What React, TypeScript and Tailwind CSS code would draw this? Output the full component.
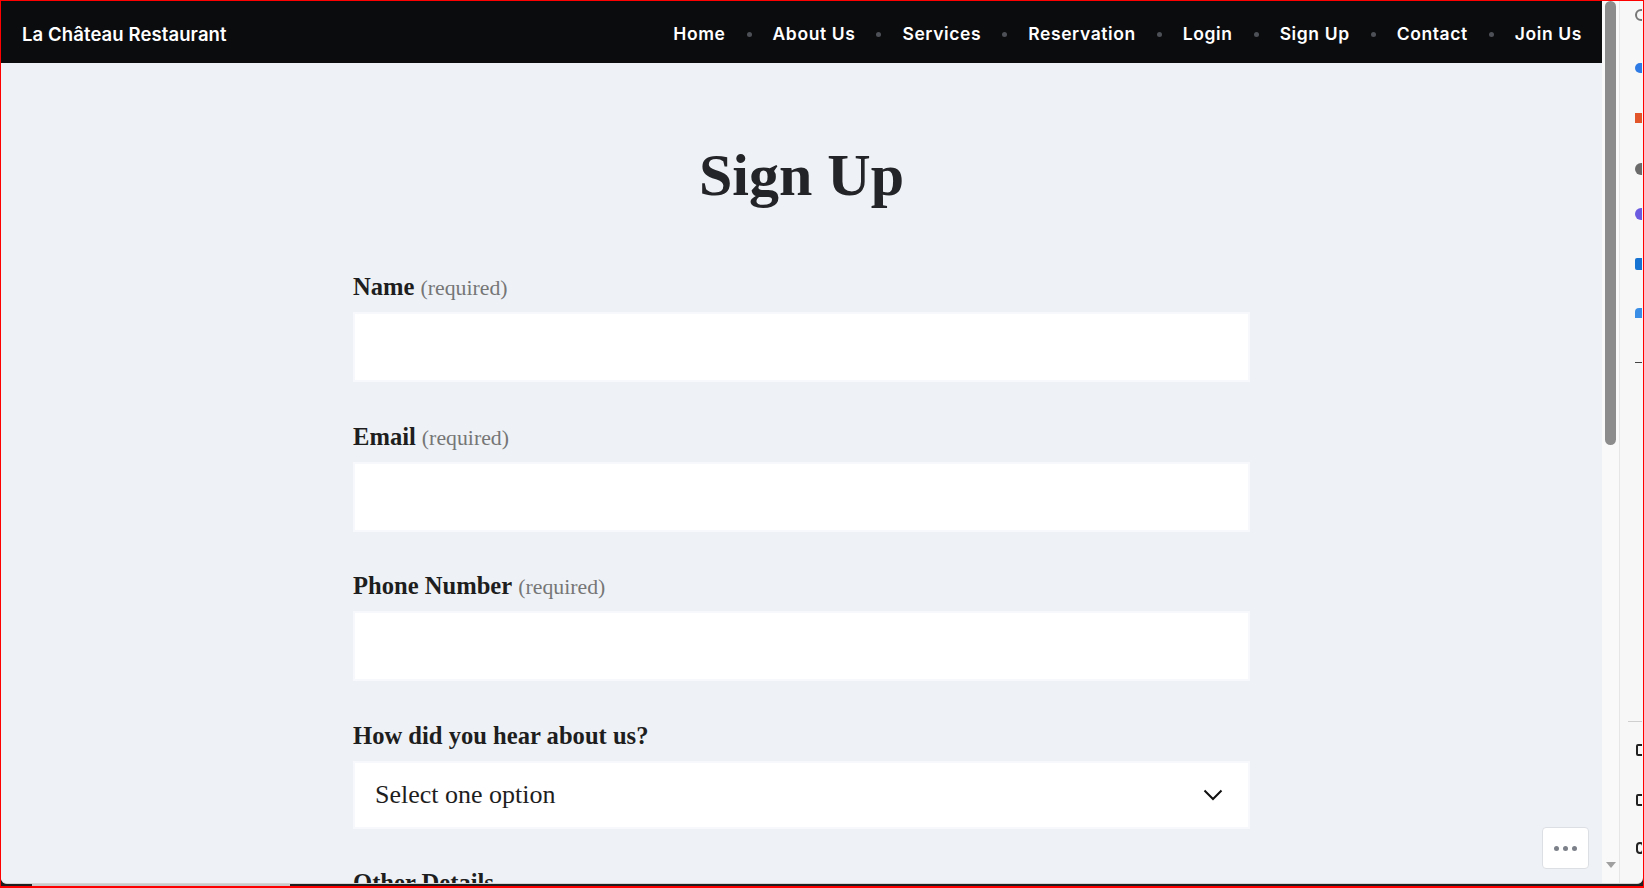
import React from "react";

const serif = { fontFamily: '"Liberation Serif", "Times New Roman", serif' };
const sans = { fontFamily: 'Inter, "Noto Sans", sans-serif' };

function Field({ label, required }: { label: string; required?: boolean }) {
  return (
    <div className="flex flex-col">
      <div className="h-[26px] mb-[12px] flex items-end whitespace-nowrap leading-none">
        <span className="text-[24.6px] font-bold text-[#1e1e1e] leading-none">{label}</span>
        {required && (
          <span className="text-[21.8px] text-[#767676] leading-none ml-[6px]">(required)</span>
        )}
      </div>
      <div className="h-[70px] bg-white border-2 border-[#f6f8fb]" />
    </div>
  );
}

export default function App() {
  const nav = ["Home", "About Us", "Services", "Reservation", "Login", "Sign Up", "Contact", "Join Us"];
  return (
    <div className="w-[1644px] h-[888px] overflow-hidden bg-[#ff0000] pt-[1px] px-[1px] pb-[2px] flex flex-col">
      <div className="flex-1 flex flex-col bg-[#1f1f1f] min-h-0">
        <div className="flex-1 flex min-h-0 rounded-b-[6px] overflow-hidden border-b border-[#d4d4d4] bg-[#f7f7f7]">
          <main className="w-[1601px] shrink-0 flex flex-col bg-[#eef2f6] overflow-hidden relative">
            <header className="h-[62px] shrink-0 bg-[#0b0c0e] flex items-center justify-between pl-[21px] pr-[20px]" style={sans}>
              <div className="text-white font-semibold text-[18.5px] tracking-[0.1px] mt-[5px]">La Château Restaurant</div>
              <nav className="flex items-center mt-[4px]">
                {nav.map((n, i) => (
                  <React.Fragment key={n}>
                    {i > 0 && <span className="w-[5px] h-[5px] rounded-full bg-[#4d5056] mx-[21px]" />}
                    <span className="text-white font-semibold text-[17.5px] tracking-[0.6px]">{n}</span>
                  </React.Fragment>
                ))}
              </nav>
            </header>
            <div className="flex flex-col items-center" style={serif}>
              <h1 className="mt-[82px] text-[60px] font-bold leading-none text-[#232427]">Sign Up</h1>
              <div className="w-[897px] mt-[69px] flex flex-col gap-[41.5px]">
                <Field label="Name" required />
                <Field label="Email" required />
                <Field label="Phone Number" required />
                <div className="flex flex-col">
                  <div className="h-[26px] mb-[12px] flex items-end leading-none">
                    <span className="text-[24.6px] font-bold text-[#1e1e1e] leading-none">How did you hear about us?</span>
                  </div>
                  <div className="h-[68px] bg-white border-2 border-[#f6f8fb] flex items-center justify-between pl-[20px] pr-[25px]">
                    <span className="text-[26px] leading-none text-[#1e1e1e]">Select one option</span>
                    <svg width="20" height="12" viewBox="0 0 20 12" fill="none">
                      <polyline points="1.5,1.5 10,10 18.5,1.5" stroke="#111" strokeWidth="2" />
                    </svg>
                  </div>
                </div>
                <div className="flex flex-col">
                  <div className="h-[26px] mb-[12px] flex items-end leading-none">
                    <span className="text-[24.6px] font-bold text-[#1e1e1e] leading-none">Other Details</span>
                  </div>
                  <div className="h-[70px] bg-white border-2 border-[#f6f8fb]" />
                </div>
              </div>
            </div>
            <div className="absolute left-[1541px] top-[826px] w-[47px] h-[42px] bg-white border border-[#dcdfe4] rounded-[4px] flex items-center justify-center gap-[4px]">
              <span className="w-[5px] h-[5px] rounded-full bg-[#7b8089]" />
              <span className="w-[5px] h-[5px] rounded-full bg-[#7b8089]" />
              <span className="w-[5px] h-[5px] rounded-full bg-[#7b8089]" />
            </div>
          </main>
          <div className="w-[18px] shrink-0 bg-[#f9f9f9] flex flex-col items-center border-r border-[#e6e6e6]">
            <div className="w-[11px] h-[444px] rounded-full bg-[#8c8c8c]" />
            <div className="flex-1" />
            <svg width="10" height="6" viewBox="0 0 10 6" className="mb-[15px]">
              <polygon points="0,0 10,0 5,6" fill="#a0a0a0" />
            </svg>
          </div>
          <div className="w-[22px] shrink-0 bg-[#f7f7f7] flex flex-col overflow-hidden">
            <div className="ml-[15px] mt-[8px] w-[12px] h-[12px] rounded-full border-2 border-[#777]" />
            <div className="ml-[15px] mt-[42px] w-[12px] h-[10px] bg-[#2f7be5] rounded-l-full" />
            <div className="ml-[15px] mt-[40px] w-[12px] h-[10px] bg-[#e2552a]" />
            <div className="ml-[15px] mt-[40px] w-[12px] h-[12px] rounded-full bg-[#6b6b6b]" />
            <div className="ml-[15px] mt-[33px] w-[12px] h-[12px] rounded-full bg-[#6a5be0]" />
            <div className="ml-[15px] mt-[38px] w-[12px] h-[12px] rounded-[2px] bg-[#1673d1]" />
            <div className="ml-[15px] mt-[38px] w-[12px] h-[10px] bg-[#3a8ee6] rounded-tl-[4px] border-r-4 border-[#f2a51a]" />
            <div className="ml-[15px] mt-[44px] w-[8px] h-[1px] bg-[#444]" />
            <div className="ml-[8px] mt-[358px] w-[14px] h-[1px] bg-[#cfcfcf]" />
            <div className="ml-[16px] mt-[22px] w-[8px] h-[12px] border-2 border-[#222] rounded-[2px]" />
            <div className="ml-[16px] mt-[38px] w-[8px] h-[12px] border-2 border-[#222] rounded-[2px]" />
            <div className="ml-[16px] mt-[36px] w-[8px] h-[12px] border-2 border-[#222] rounded-full" />
          </div>
        </div>
        <div className="h-[2px] shrink-0 flex">
          <div className="w-[31px]" />
          <div className="w-[258px] bg-[#c9c9c9]" />
        </div>
      </div>
    </div>
  );
}
